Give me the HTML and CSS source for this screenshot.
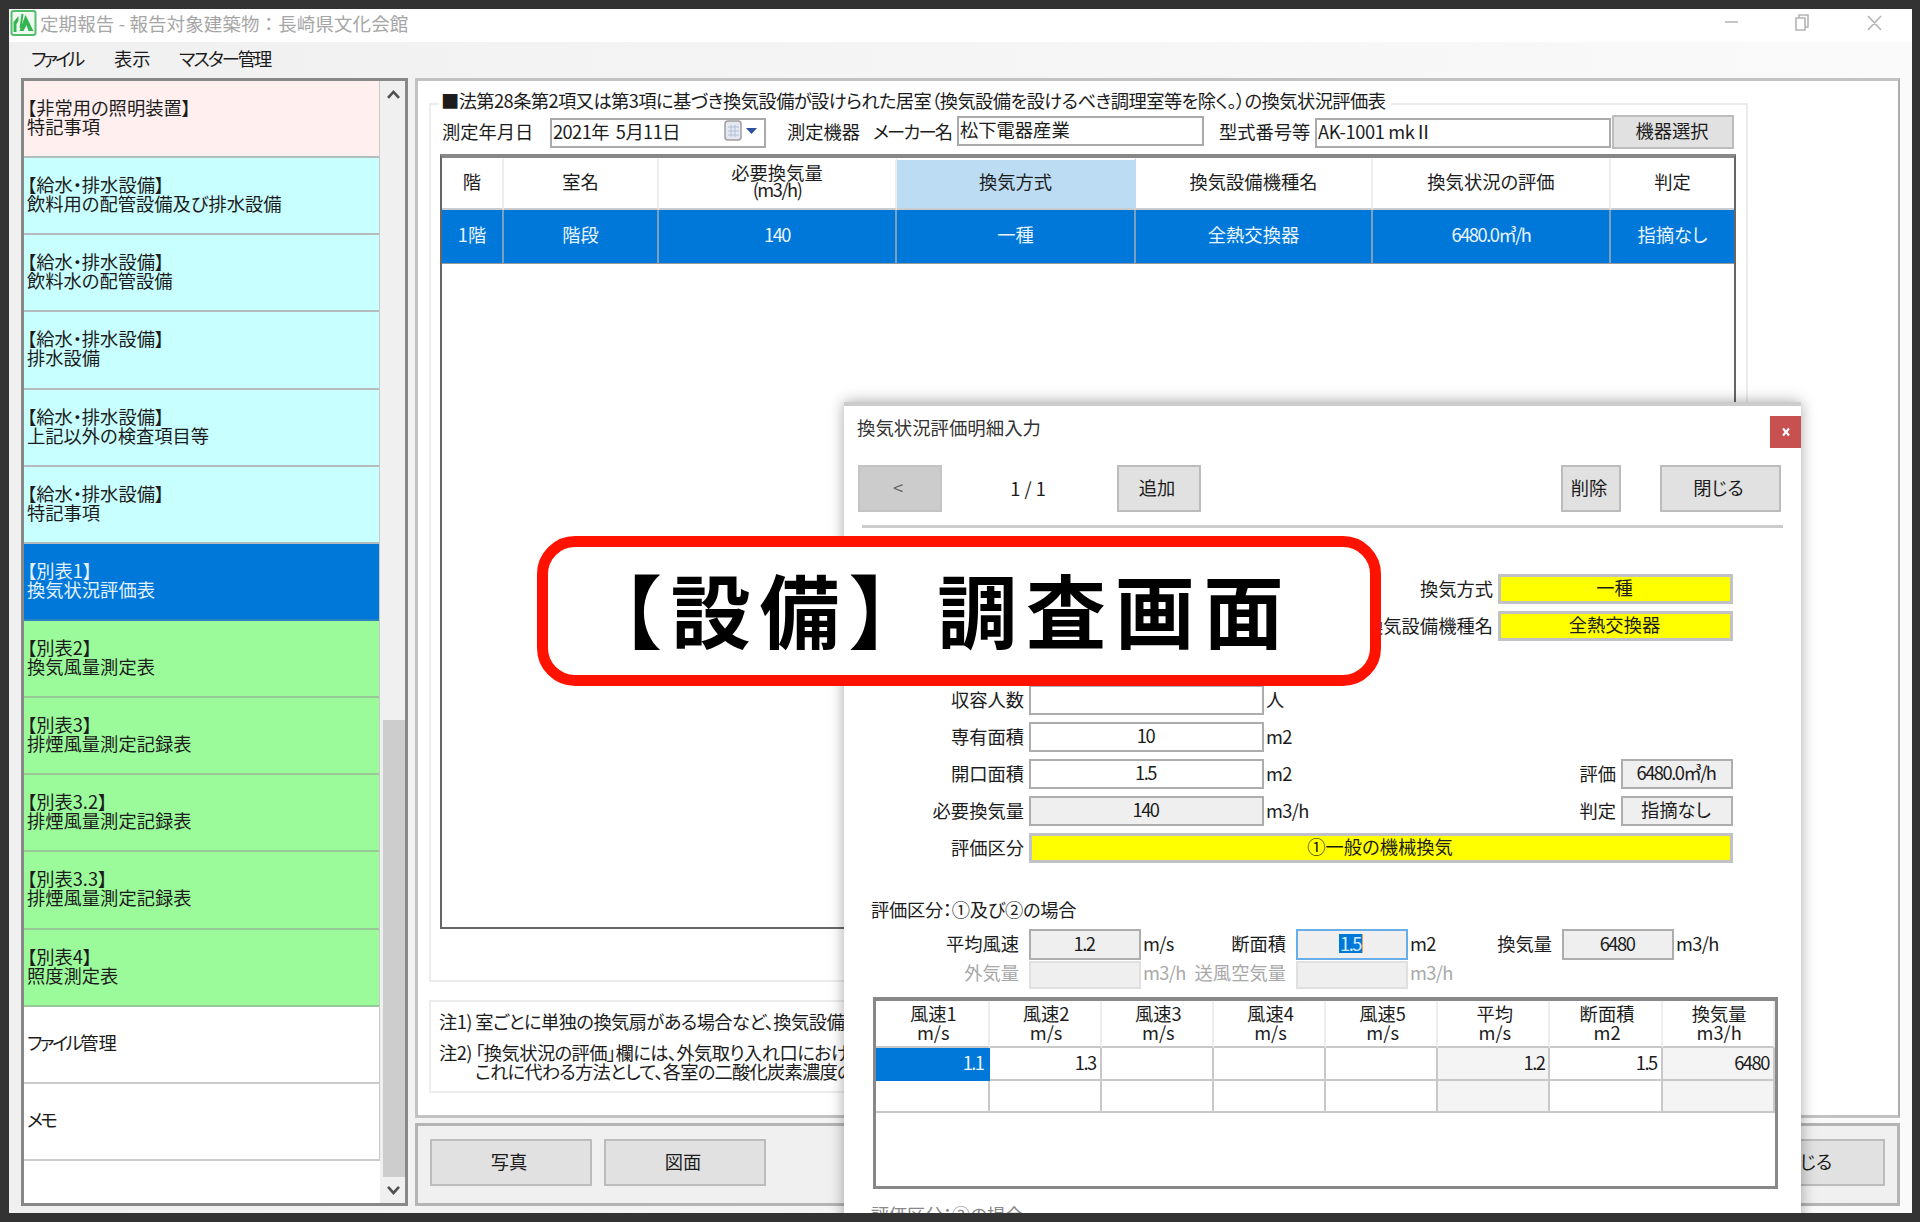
FILE: index.html
```html
<!DOCTYPE html>
<html lang="ja">
<head>
<meta charset="utf-8">
<title>定期報告</title>
<link rel="stylesheet" href="styles.css">
</head>
<body>
<div class="window">
  <header class="titlebar">
    <svg class="app-icon" viewBox="0 0 26 26"><rect x="1" y="1" width="24" height="24" rx="2" fill="#eefaf0" stroke="#52bd6a" stroke-width="2"/><path d="M3 22V12L8 6v5l-2 3v8zM9 21l6-16 8 16h-5l-2-6-3 6z" fill="#35b552"/><path d="M12 4l-2 14" stroke="#35b552" stroke-width="2"/></svg>
    <span class="app-title">定期報告 - 報告対象建築物：長崎県文化会館</span>
    <svg class="caption-buttons" viewBox="0 0 170 32" fill="none" stroke="#b4b4b4" stroke-width="1.6"><path d="M6 14h13M77 10h9v12h-9zM80 10V7h9v12h-3M149 8l13 14M162 8l-13 14"/></svg>
  </header>
  <nav class="menubar"><span class="m-file">ファイル</span><span class="m-view">表示</span><span class="m-master">マスター管理</span></nav>
  <div class="body">
    <aside class="sidebar">
      <div class="list">
        <div class="item pink">【非常用の照明装置】<br>特記事項</div>
        <div class="item cyan">【給水・排水設備】<br>飲料用の配管設備及び排水設備</div>
        <div class="item cyan">【給水・排水設備】<br>飲料水の配管設備</div>
        <div class="item cyan">【給水・排水設備】<br>排水設備</div>
        <div class="item cyan">【給水・排水設備】<br>上記以外の検査項目等</div>
        <div class="item cyan">【給水・排水設備】<br>特記事項</div>
        <div class="item selected">【別表1】<br>換気状況評価表</div>
        <div class="item green">【別表2】<br>換気風量測定表</div>
        <div class="item green">【別表3】<br>排煙風量測定記録表</div>
        <div class="item green">【別表3.2】<br>排煙風量測定記録表</div>
        <div class="item green">【別表3.3】<br>排煙風量測定記録表</div>
        <div class="item green">【別表4】<br>照度測定表</div>
        <div class="item"><span class="kana">ファイル</span>管理</div>
        <div class="item"><span class="kana">メモ</span></div>
      </div>
      <div class="scrollbar">
        <svg viewBox="0 0 24 26" fill="none" stroke="#505050" stroke-width="2.6"><path d="M7.500 17l5.500-6 5.500 6"/></svg>
        <div class="thumb"></div>
        <svg viewBox="0 0 24 26" fill="none" stroke="#505050" stroke-width="2.600"><path d="M7.500 10l5.500 6 5.500-6"/></svg>
      </div>
    </aside>
    <main class="main">
      <section class="content">
        <div class="group table-group">
          <div class="legend"><span>■法第28条第2項又は第3項に基づき換気設備が設けられた居室（換気設備を設けるべき調理室等を除く。）の換気状況評価表</span></div>
          <div class="filters">
            <label class="l-date">測定年月日</label>
            <div class="box date"><span>2021年&nbsp; 5月11日</span>
              <svg viewBox="0 0 34 24"><rect x="1" y="2" width="16" height="19" rx="3" fill="#e4e8f2" stroke="#a49c9c" stroke-width="1.500"/><path d="M4 8h11M4 12h11M4 16h11M7 6v12M11 6v12" stroke="#b3bfd6"/><path d="M22 9h11l-5.500 6z" fill="#2c4f9e"/></svg>
            </div>
            <label class="l-device">測定機器</label>
            <label class="l-maker">メーカー名</label>
            <div class="box maker">松下電器産業</div>
            <label class="l-model">型式番号等</label>
            <div class="box model">AK-1001 mkⅡ</div>
            <div class="button choose">機器選択</div>
          </div>
          <div class="grid">
            <div class="row head"><div>階</div><div>室名</div><div>必要換気量<br><span class="num">(m3/h)</span></div><div class="hot">換気方式</div><div>換気設備機種名</div><div>換気状況の評価</div><div>判定</div></div>
            <div class="row record"><div>1階</div><div>階段</div><div class="num">140</div><div>一種</div><div>全熱交換器</div><div class="num">6480.0㎥/h</div><div>指摘なし</div></div>
          </div>
        </div>
        <div class="group notes">
          <p>注1) 室ごとに単独の換気扇がある場合など、換気設備ごとに</p>
          <p class="second">注2) 「換気状況の評価」欄には、外気取り入れ口における</p>
          <p class="indent">これに代わる方法として、各室の二酸化炭素濃度の測定</p>
        </div>
      </section>
      <footer class="actions"><div class="button wide">写真</div><div class="button wide">図面</div><div class="button close">閉じる</div></footer>
    </main>
  </div>

  <section class="dialog">
    <header class="dlg-title"><span>換気状況評価明細入力</span><div class="dlg-close"><svg viewBox="0 0 10 10"><path d="M2 1.500l6 7M8 1.500l-6 7" stroke="#fff" stroke-width="2.200"/></svg></div></header>
    <div class="dlg-tools"><div class="button prev">&lt;</div><span class="pager">1 / 1</span><div class="button add">追加</div><div class="button del">削除</div><div class="button shut">閉じる</div></div>
    <div class="form">
      <div class="line"><label class="right">換気方式</label><div class="field yellow">一種</div></div>
      <div class="line"><label class="right">換気設備機種名</label><div class="field yellow">全熱交換器</div></div>
      <div class="line"></div>
      <div class="line"><label>収容人数</label><div class="field"></div><span class="unit">人</span></div>
      <div class="line"><label>専有面積</label><div class="field num">10</div><span class="unit">m2</span></div>
      <div class="line"><label>開口面積</label><div class="field num">1.5</div><span class="unit">m2</span><label class="mid">評価</label><div class="field small gray num">6480.0㎥/h</div></div>
      <div class="line"><label>必要換気量</label><div class="field gray num">140</div><span class="unit">m3/h</span><label class="mid">判定</label><div class="field small gray">指摘なし</div></div>
      <div class="line"><label>評価区分</label><div class="field yellow full">①一般の機械換気</div></div>
    </div>
    <div class="case">評価区分：①及び②の場合</div>
    <div class="calc">
      <label>平均風速</label><div class="field gray num">1.2</div><span class="unit">m/s</span>
      <label>断面積</label><div class="field gray focus num"><span>1.5</span></div><span class="unit">m2</span>
      <label>換気量</label><div class="field gray num">6480</div><span class="unit">m3/h</span>
    </div>
    <div class="calc off">
      <label>外気量</label><div class="field gray"></div><span class="unit">m3/h</span>
      <label>送風空気量</label><div class="field gray"></div><span class="unit">m3/h</span>
    </div>
    <div class="speeds">
      <div class="row head"><div>風速1<br>m/s</div><div>風速2<br>m/s</div><div>風速3<br>m/s</div><div>風速4<br>m/s</div><div>風速5<br>m/s</div><div>平均<br>m/s</div><div>断面積<br>m2</div><div>換気量<br>m3/h</div></div>
      <div class="row num"><div class="picked">1.1</div><div>1.3</div><div></div><div></div><div></div><div class="ro">1.2</div><div>1.5</div><div class="ro">6480</div></div>
      <div class="row"><div></div><div></div><div></div><div></div><div></div><div class="ro"></div><div></div><div class="ro"></div></div>
    </div>
    <div class="case next">評価区分：③の場合</div>
  </section>
  <div class="callout">【設備】調査画面</div>
</div>
</body>
</html>
```
FILE: styles.css
```css
* { box-sizing: border-box; }
body {
  margin: 0;
  width: 1920px;
  height: 1222px;
  padding: 9px 8px 9px 9px;
  overflow: hidden;
  background: #333;
  color: #1c1c1c;
  font: 18.3px/19px "Noto Sans CJK JP", sans-serif;
  font-feature-settings: "palt";
  white-space: nowrap;
}
p { margin: 0; }
.window { position: relative; width: 1903px; height: 1204px; overflow: hidden; background: linear-gradient(90deg, #f0f0f0, #fafafa); }
.titlebar { display: flex; align-items: center; height: 33px; background: #fff; }
.app-icon { width: 27px; height: 26px; margin: 0 4px 5px 1px; }
.app-title { flex: 1; color: #a6a6a6; font-size: 18.5px; letter-spacing: .1px; font-feature-settings: normal; margin: 0 0 4px -1px; }
.caption-buttons { width: 170px; height: 32px; margin: -4px 23px 0 0; }
.menubar { display: flex; height: 36px; padding: 0 22px 4px; align-items: center; }
.menubar .m-file { width: 83px; letter-spacing: -3px; }
.menubar .m-view { width: 65px; }
.menubar .m-master { letter-spacing: -2px; }
.body { display: flex; height: 1128px; padding-left: 12px; gap: 7px; }

.sidebar { display: flex; width: 387px; border: 3px solid #888; background: #fff; }
.list { width: 356px; border-right: 1px solid #c8c8c8; height: 1080px; }
.item { height: 77.15px; padding: 17px 0 0 3px; border-bottom: 2px solid #b4bcbc; }
.item:nth-last-child(-n+2) { padding-top: 26px; border-color: #ccc; }
.kana { letter-spacing: -2.5px; }
.pink { background: #ffefef; }
.cyan { background: #c8ffff; }
.green { background: #9bfb9b; border-color: #98c898; }
.selected { background: #0078d9; color: #e4f2ff; border-color: #2b80c0; }
.scrollbar { display: flex; flex-direction: column; justify-content: space-between; width: 25px; background: #f0f0f0; }
.scrollbar svg { width: 25px; height: 26px; }
.thumb { width: 22px; height: 458px; margin: 613px 0 0 3px; background: #cdcdcd; }

.main { display: flex; flex-direction: column; gap: 5px; width: 1485px; }
.content { height: 1040px; border: 3px solid #c2c2c2; border-right: 2px solid #adadad; background: #fff; padding: 10px 0 0 11px; }
.group { width: 1319px; }
.table-group { position: relative; height: 891px; padding-left: 11px; }
.table-group::before { content: ""; position: absolute; inset: 12px 0 0 0; border: 2px solid #ececec; z-index: 0; }
.legend { position: relative; height: 23px; }
.legend span { display: inline-block; padding: 0 6px 0 2px; margin-left: -1px; background: #fff; letter-spacing: -.6px; }
.filters { position: relative; display: flex; align-items: center; height: 36px; padding-top: 1px; }
.filters label { margin-top: -3px; }
.l-date { width: 110px; padding-left: 2px; }
.box { display: flex; align-items: center; height: 30px; border: 2px solid #aaa; background: #fff; padding: 0 0 3px 1px; }
.date { width: 216px; justify-content: space-between; padding-right: 6px; letter-spacing: -.6px; }
.date svg { width: 34px; height: 24px; }
.l-device { width: 107px; padding-left: 21px; }
.l-maker { width: 84px; letter-spacing: -1.8px; }
.maker { width: 247px; margin-top: -3px; }
.l-model { width: 111px; padding-left: 15px; }
.model { width: 296px; letter-spacing: -.4px; }
.button { display: flex; align-items: center; justify-content: center; padding: 0 2px 2px 0; background: #e1e1e1; border: 2px solid #bcbcbc; }
.choose { width: 122px; height: 34px; margin: -2px 0 0 1px; }
.grid { position: relative; width: 1296px; height: 775px; margin-top: 4px; border: 2px solid #666; border-top: 4px solid #888; background: #fff; }
.row { display: grid; text-align: center; }
.grid .row { grid-template-columns: 62px 155px 238px 239px 237px 238px 123px; }
.row > div { display: grid; place-items: center; align-content: center; }
.grid .head > div { height: 52px; padding-bottom: 6px; border: 0 solid #ededed; border-width: 2px 2px 2px 0; border-color: #fff #ededed #ccc #fff; line-height: 17px; }
.grid .head .hot { background: #bcdcf4; border-right-color: #bcdcf4; }
.grid .head > div:last-child { border-right: 0; }
.record { background: #0078d9; color: #e9f4ff; border-bottom: 1px solid #999; }
.record > div { height: 53px; padding-bottom: 4px; border-right: 2px solid #7c9fbd; }
.record > div:last-child { border: 0; }
.num { letter-spacing: -1.5px; }
.notes { height: 93px; margin-top: 18px; border: 2px solid #ececec; padding: 10px 0 0 8px; letter-spacing: -.6px; overflow: hidden; }
.notes .second { margin-top: 12px; }
.notes .indent { padding-left: 36px; letter-spacing: -.8px; }
.actions { display: flex; gap: 12px; height: 83px; padding: 13px 12px 0; border: 3px solid #b4b4b4; background: #f0f0f0; }
.actions .button { height: 47px; padding: 0 4px 3px 0; }
.wide { width: 162px; }
.actions .close { width: 152px; margin-left: auto; }

.dialog { position: absolute; left: 835px; top: 393px; width: 957px; height: 830px; border-top: 4px solid #ccc; background: #fff; box-shadow: 0 0 14px rgba(0,0,0,.35); }
.dlg-title { display: flex; justify-content: space-between; height: 60px; padding: 10px 0 0 13px; color: #333; font-size: 18.4px; font-feature-settings: normal; }
.dlg-title span { margin-top: 2px; }
.dlg-close { display: grid; place-items: center; width: 31px; height: 32px; background: #c75050; }
.dlg-close svg { width: 10px; height: 10px; }
.dlg-tools { display: flex; align-items: center; height: 62px; margin: 0 18px 46px; padding: 0 3px 14px 0; border-bottom: 3px solid #ccc; }
.dlg-tools .button { height: 47px; flex: none; padding: 0 4px 2px 0; }
.dlg-tools .prev { width: 84px; margin-left: -4px; background: #ccc; border-color: #c4c4c4; color: #666; }
.pager { flex: none; width: 175px; padding-right: 3px; text-align: center; }
.add { width: 84px; }
.del { width: 60px; margin-left: 360px; }
.shut { width: 121px; margin-left: 39px; }
.form { display: grid; grid-auto-rows: 37px; }
.line { display: flex; }
.line label { width: 180px; text-align: right; line-height: 28px; }
.line label.right { width: 649px; }
.line label.mid { width: 0; flex: 1; }
.line label.mid + .field { margin-right: 68px; }
.field { flex: none; display: flex; align-items: center; justify-content: center; width: 235px; height: 30px; margin-left: 5px; padding: 0 2px 3px 0; background: #fff; border: 2px solid #adadad; }
.yellow { background: #ff0; border: 3px solid #c1c1c8; }
.gray { background: #efefef; }
.small { width: 112px; }
.full { width: 704px; }
.unit { padding-left: 2px; line-height: 28px; letter-spacing: -.7px; }
.case { margin: 30px 0 0 27px; height: 29px; letter-spacing: -.3px; }
.calc { display: grid; grid-template-columns: 175px 122px 42px 103px 122px 42px 102px 122px 60px; height: 32px; }
.calc label { text-align: right; line-height: 28px; }
.calc .field { width: 112px; margin-left: 10px; height: 31px; }
.calc .focus { border-color: #69aee8; }
.focus span { background: #0078d7; color: #d5ecff; padding: 0 1px; border-right: 1px solid #e6a25c; }
.off { color: #a8a8a8; height: 36px; }
.off .field { border-color: #e0e0e0; height: 28px; }
.off label, .off .unit { line-height: 23px; }
.speeds { width: 905px; height: 192px; margin-left: 29px; border: 3px solid #888; border-top-width: 4px; }
.speeds .row { grid-template-columns: 113.5px repeat(7, 112.2px); }
.speeds .row > div { height: 32.5px; padding: 0 4px 1px 0; border: 0 solid #c8c8c8; border-width: 0 2px 2px 0; justify-items: end; }
.speeds .head > div { height: 47px; border-right-color: #eee; justify-items: center; padding: 0 0 2px 3px; }
.speeds .row > div.picked { background: #0078d9; color: #e9f4ff; border-color: #0078d9; }
.speeds .row > div.ro { background: #f4f4f4; }
.next { margin-top: 16px; color: #888; }

.callout { position: absolute; left: 528px; top: 527px; width: 844px; height: 150px; padding-left: 34px; border: 11px solid #ff1300; border-radius: 38px; background: #fff; color: #000; font-size: 80px; font-weight: 700; line-height: 120px; letter-spacing: 8.800px; font-feature-settings: normal; }
```
